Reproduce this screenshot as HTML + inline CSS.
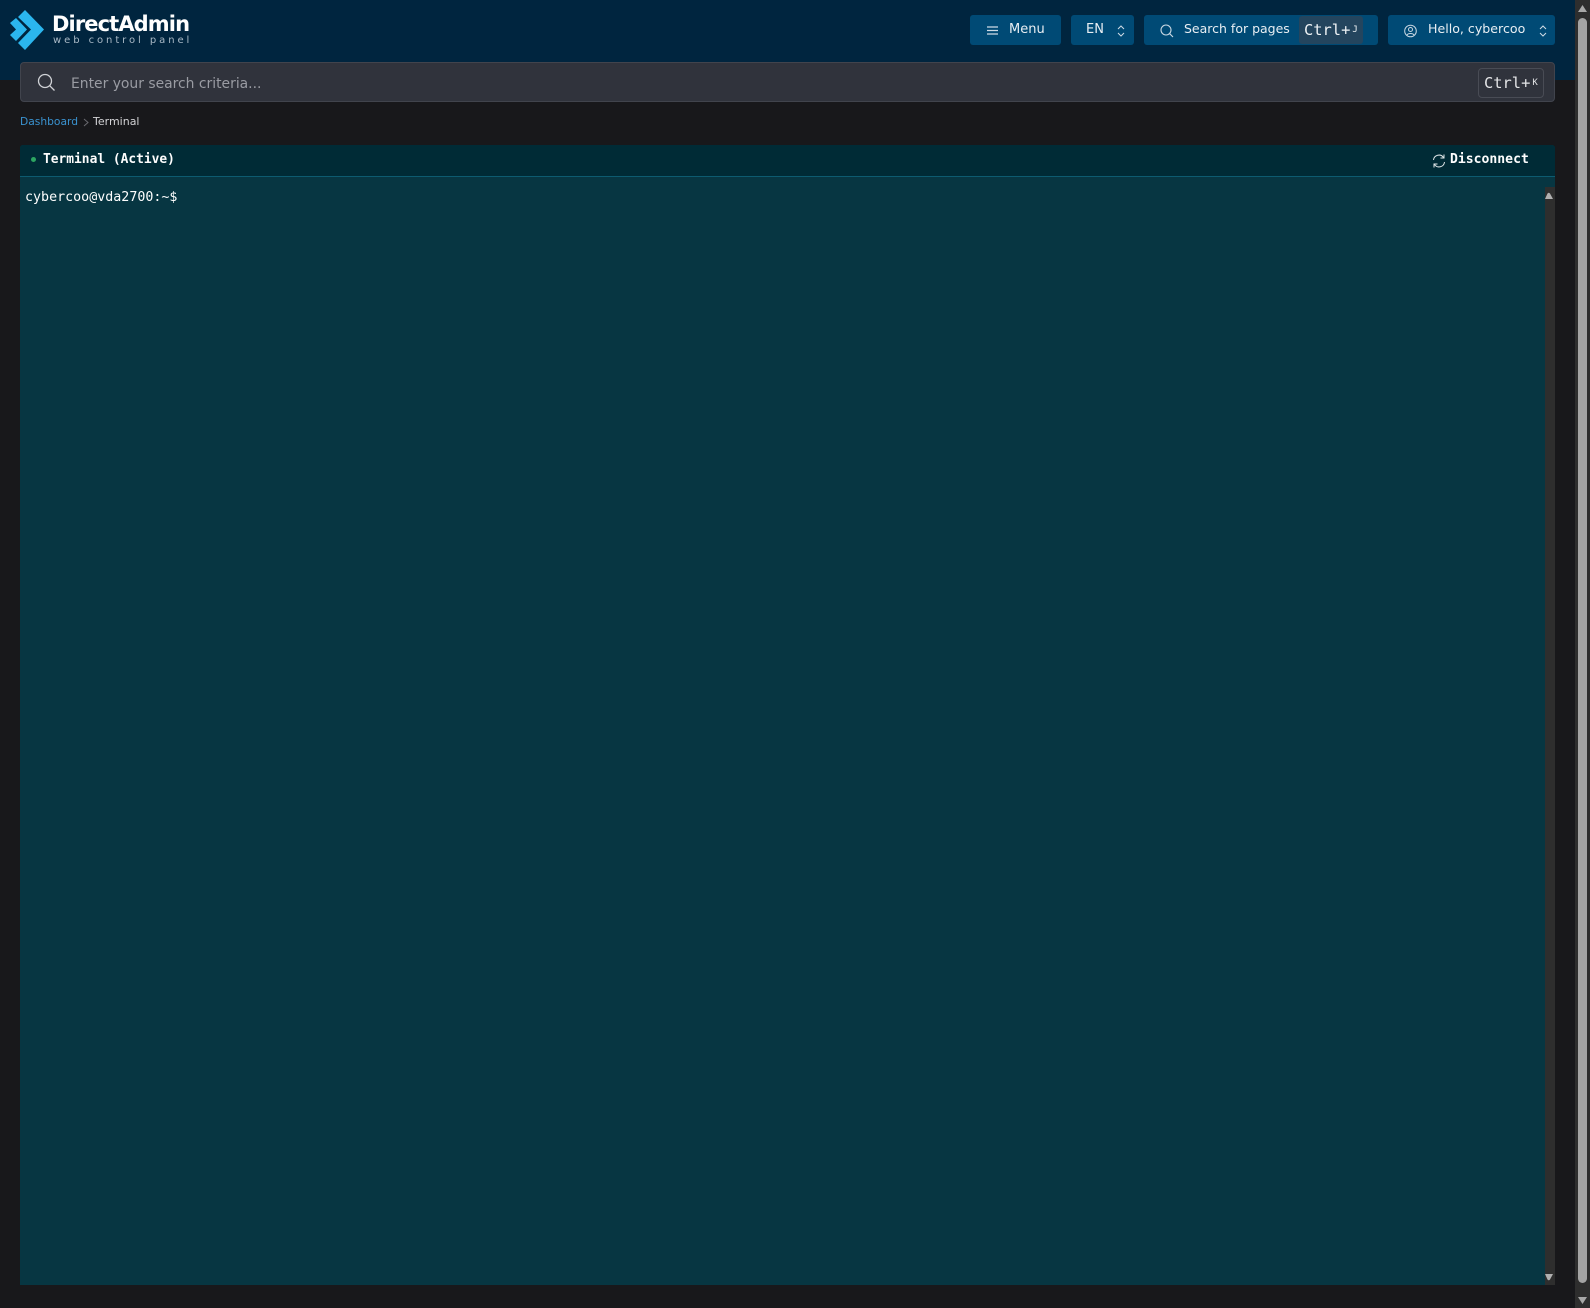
<!DOCTYPE html>
<html lang="en"><head><meta charset="utf-8"><title>DirectAdmin Terminal</title>
<style>
html,body{margin:0;padding:0;width:1590px;height:1308px;overflow:hidden;background:#18181b}
*{box-sizing:border-box}
.a{position:absolute;white-space:nowrap}
body{font-family:"DejaVu Sans",sans-serif;color:#fff}
.mono{font-family:"DejaVu Sans Mono",monospace}
.btn{position:absolute;top:15px;height:30px;background:#004a75;border-radius:3px}
.t{position:absolute;white-space:nowrap;font-size:12.5px;line-height:30px;color:#e8eef3;top:14px}
svg{position:absolute;overflow:visible}
</style></head><body>
<div class="a" style="left:0;top:0;width:1575px;height:80px;background:#00253f"></div>

<svg style="left:0;top:0" width="60" height="60"><polygon points="25,10 44,29.5 25,50 18,43 31,29.5 18,17" fill="#2bb6ee"/><polygon points="10,23 16,18 27,29.5 16,41 10,35 16,29.5" fill="#2bb6ee"/></svg>
<div class="a" style="left:52px;top:11px;font:bold 21px/26px 'DejaVu Sans',sans-serif;letter-spacing:-.9px;color:#fff">DirectAdmin</div>
<div class="a" style="left:53px;top:35px;font:10px/12px 'DejaVu Sans',sans-serif;letter-spacing:2.93px;color:#a9b9c6">web control panel</div>

<div class="btn" style="left:970px;width:91px"></div>
<svg style="left:987px;top:26px" width="12" height="10" stroke="#cfdce6" stroke-width="1.2"><path d="M0 1H11M0 4.5H11M0 8H11"/></svg>
<div class="t" style="left:1009px;top:15px;font-size:13px">Menu</div>
<div class="btn" style="left:1071px;width:63px"></div>
<div class="t" style="left:1086px;top:15px;font-size:13px">EN</div>
<svg style="left:1117px;top:25px" width="8" height="12" fill="none" stroke="#cfdce6" stroke-width="1"><path d="M1 4L4 1L7 4M1 8L4 11L7 8"/></svg>
<div class="btn" style="left:1144px;width:234px"></div>
<svg style="left:1160px;top:24px" width="14" height="14" fill="none" stroke="#c9d8e3" stroke-width="1.1"><circle cx="6" cy="6" r="5"/><path d="M9.7 9.7L13 13"/></svg>
<div class="t" style="left:1184px">Search for pages</div>
<div class="a" style="left:1299px;top:16px;width:64px;height:28px;background:#24455e;border-radius:3px"></div>
<div class="a mono" style="left:1304px;top:20px;font-size:15.4px;line-height:20px;color:#eef2f5">Ctrl+<span style="font-size:9px;vertical-align:3px;margin-left:2px">J</span></div>
<div class="btn" style="left:1388px;width:167px"></div>
<svg style="left:1404px;top:24px" width="14" height="14" fill="none" stroke="#c9d8e3" stroke-width="1"><circle cx="6.5" cy="7" r="5.8"/><circle cx="6.5" cy="5.5" r="2"/><path d="M3 11C4 9 9 9 10 11"/></svg>
<div class="t" style="left:1428px;font-size:12.6px">Hello, cybercoo</div>
<svg style="left:1539px;top:25px" width="8" height="12" fill="none" stroke="#cfdce6" stroke-width="1"><path d="M1 4L4 1L7 4M1 8L4 11L7 8"/></svg>

<div class="a" style="left:20px;top:62px;width:1535px;height:40px;background:#30333c;border:1px solid #41444d;border-radius:4px"></div>
<svg style="left:38px;top:74px" width="18" height="18" fill="none" stroke="#d0d2d6" stroke-width="1.3"><circle cx="7" cy="7" r="6.5"/><path d="M11.8 11.8L16.5 16.5"/></svg>
<div class="a" style="left:71px;top:73.5px;font-size:13.9px;line-height:20px;color:#9a9ca3">Enter your search criteria...</div>
<div class="a" style="left:1478px;top:68px;width:66px;height:30px;border:1px solid #494c55;border-radius:4px"></div>
<div class="a mono" style="left:1484px;top:73px;font-size:15.4px;line-height:20px;color:#e4e5e7">Ctrl+<span style="font-size:9px;vertical-align:3px;margin-left:2px">K</span></div>

<div class="a" style="left:20px;top:114px;font-size:10.7px;line-height:15px;color:#3a92cf">Dashboard</div>
<svg style="left:83px;top:118px" width="6" height="9" fill="none" stroke="#6a6a70"><path d="M1 1L5 4.5L1 8"/></svg>
<div class="a" style="left:93px;top:114px;font-size:11px;line-height:15px;color:#d2d2d5">Terminal</div>

<div class="a" style="left:20px;top:145px;width:1535px;height:1140px;background:#073642;border-radius:3px 3px 0 0"></div>
<div class="a" style="left:20px;top:145px;width:1535px;height:32px;background:#002b36;border-bottom:1px solid #0d5b70;border-radius:3px 3px 0 0"></div>
<div class="a" style="left:31px;top:157px;width:5px;height:5px;border-radius:50%;background:#2ca561"></div>
<div class="a mono" style="left:43px;top:151px;font-size:12.9px;font-weight:bold;line-height:18px;color:#fdfdfd">Terminal (Active)</div>
<svg style="left:1432px;top:153.5px" width="14" height="14" fill="none" stroke="#dfe6e8" stroke-width="1"><path d="M1.5 6A5.5 5.5 0 0 1 11.5 3.5M12.5 8A5.5 5.5 0 0 1 2.5 10.5"/><path d="M12 0.5V4H8.5M2 13.5V10H5.5"/></svg>
<div class="a mono" style="left:1450px;top:151px;font-size:13.1px;font-weight:bold;line-height:18px;color:#fdfdfd">Disconnect</div>
<div class="a mono" style="left:25px;top:189px;font-size:13.33px;line-height:18px;color:#fdfdfd">cybercoo@vda2700:~$</div>
<div class="a" style="left:1545px;top:187px;width:10px;height:1098px;background:#2e2e2e"></div>
<svg style="left:1545px;top:192px" width="8" height="8"><path d="M0 7L2.5 1.5Q3.7 0 5 1.5L8 7Z" fill="#b0b0b0"/></svg>
<svg style="left:1545px;top:1274px" width="8" height="8"><path d="M0 0L2.5 5.5Q3.7 7 5 5.5L8 0Z" fill="#b0b0b0"/></svg>

<div class="a" style="left:1575px;top:0;width:15px;height:1308px;background:#2e2e2e"></div>
<div class="a" style="left:1578px;top:18px;width:9px;height:1265px;background:#a4a4a4;border-radius:5px"></div>
<svg style="left:1575px;top:0" width="15" height="15"><polygon points="3,12 12,12 7.5,5" fill="#a8a8a8"/></svg>
<svg style="left:1575px;top:1293px" width="15" height="15"><polygon points="3,4 12,4 7.5,11" fill="#a8a8a8"/></svg>
</body></html>
